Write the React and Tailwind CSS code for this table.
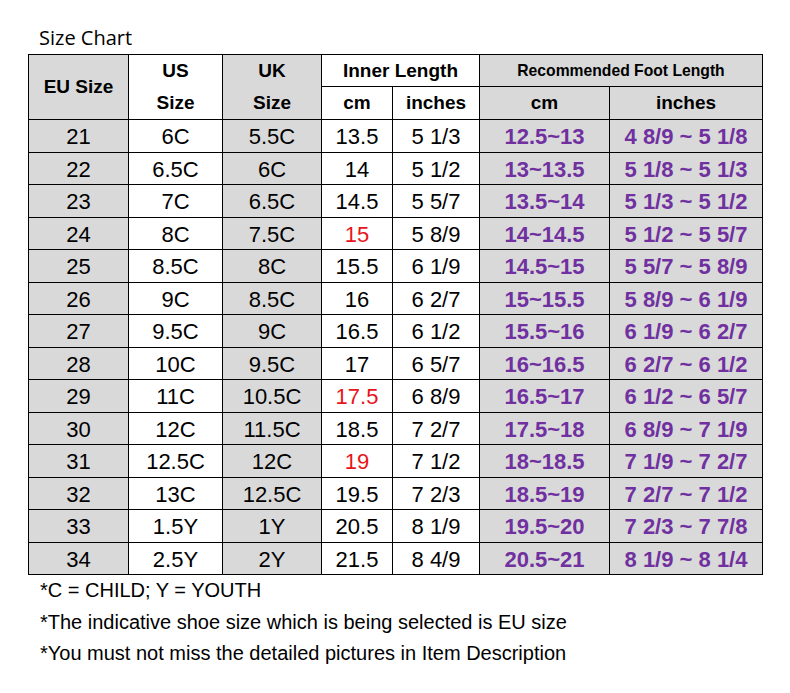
import React from 'react';

const rows = [
    ['21', '6C', '5.5C', '13.5', '5 1/3', '12.5~13', '4 8/9 ~ 5 1/8'],
    ['22', '6.5C', '6C', '14', '5 1/2', '13~13.5', '5 1/8 ~ 5 1/3'],
    ['23', '7C', '6.5C', '14.5', '5 5/7', '13.5~14', '5 1/3 ~ 5 1/2'],
    ['24', '8C', '7.5C', '15', '5 8/9', '14~14.5', '5 1/2 ~ 5 5/7', true],
    ['25', '8.5C', '8C', '15.5', '6 1/9', '14.5~15', '5 5/7 ~ 5 8/9'],
    ['26', '9C', '8.5C', '16', '6 2/7', '15~15.5', '5 8/9 ~ 6 1/9'],
    ['27', '9.5C', '9C', '16.5', '6 1/2', '15.5~16', '6 1/9 ~ 6 2/7'],
    ['28', '10C', '9.5C', '17', '6 5/7', '16~16.5', '6 2/7 ~ 6 1/2'],
    ['29', '11C', '10.5C', '17.5', '6 8/9', '16.5~17', '6 1/2 ~ 6 5/7', true],
    ['30', '12C', '11.5C', '18.5', '7 2/7', '17.5~18', '6 8/9 ~ 7 1/9'],
    ['31', '12.5C', '12C', '19', '7 1/2', '18~18.5', '7 1/9 ~ 7 2/7', true],
    ['32', '13C', '12.5C', '19.5', '7 2/3', '18.5~19', '7 2/7 ~ 7 1/2'],
    ['33', '1.5Y', '1Y', '20.5', '8 1/9', '19.5~20', '7 2/3 ~ 7 7/8'],
    ['34', '2.5Y', '2Y', '21.5', '8 4/9', '20.5~21', '8 1/9 ~ 8 1/4'],
];

const cell = 'border border-black text-center align-middle p-0';
const td = 'border border-black text-center align-middle px-0 pb-0 pt-[3px]';
const gray = 'bg-[#d9d9d9]';

const App = () => {
    return (
        <div className="w-[790px] h-[693px] bg-white pt-[26px] font-['Liberation_Sans',Arial,sans-serif] text-black">
            <div className="pl-[39px] h-[24px] leading-[24px] text-[20px] font-['Open_Sans',sans-serif] text-black">
                Size Chart
            </div>
            <table className="ml-[28px] mt-[4px] border-collapse table-fixed w-[735px] leading-[24px]">
                <colgroup>
                    <col className="w-[100px]" />
                    <col className="w-[94px]" />
                    <col className="w-[99px]" />
                    <col className="w-[71px]" />
                    <col className="w-[87px]" />
                    <col className="w-[130px]" />
                    <col className="w-[153px]" />
                </colgroup>
                <thead className="font-bold text-[19px]">
                    <tr className="h-[32px]">
                        <th rowSpan={2} className={`${cell} ${gray}`}>EU Size</th>
                        <th className={`${cell} border-b-0`}>US</th>
                        <th className={`${cell} ${gray} border-b-0`}>UK</th>
                        <th colSpan={2} className={cell}>Inner Length</th>
                        <th colSpan={2} className={`${cell} ${gray} text-[15.7px]`}>Recommended Foot Length</th>
                    </tr>
                    <tr className="h-[33px]">
                        <th className={`${cell} border-t-0`}>Size</th>
                        <th className={`${cell} ${gray} border-t-0`}>Size</th>
                        <th className={cell}>cm</th>
                        <th className={cell}>inches</th>
                        <th className={`${cell} ${gray}`}>cm</th>
                        <th className={`${cell} ${gray}`}>inches</th>
                    </tr>
                </thead>
                <tbody className="text-[22px]">
                    {rows.map((r) => (
                        <tr key={r[0]} className="h-[32.5px]">
                            <td className={`${td} ${gray}`}>{r[0]}</td>
                            <td className={td}>{r[1]}</td>
                            <td className={`${td} ${gray}`}>{r[2]}</td>
                            <td className={`${td} ${r[7] ? 'text-[#e8141b]' : ''}`}>{r[3]}</td>
                            <td className={td}>{r[4]}</td>
                            <td className={`${td} ${gray} font-bold text-[#7030a0]`}>{r[5]}</td>
                            <td className={`${td} ${gray} font-bold text-[#7030a0]`}>{r[6]}</td>
                        </tr>
                    ))}
                </tbody>
            </table>
            <div className="pl-[40px] text-[20px] leading-[31.5px]">
                <div>*C = CHILD; Y = YOUTH</div>
                <div>*The indicative shoe size which is being selected is EU size</div>
                <div>*You must not miss the detailed pictures in Item Description</div>
            </div>
        </div>
    );
};

export default App;
